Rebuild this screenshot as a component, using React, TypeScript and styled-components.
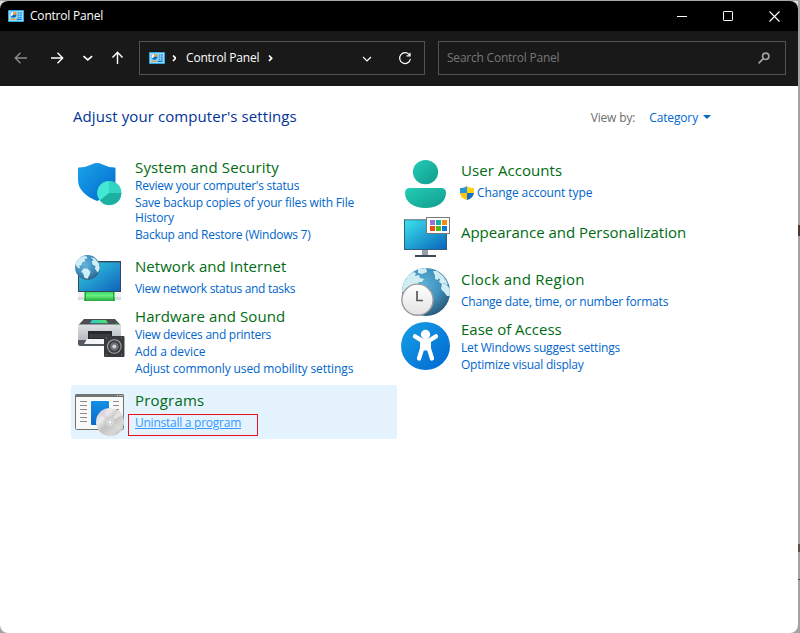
import React from "react";
import styled, { createGlobalStyle } from "styled-components";

const Global = createGlobalStyle`
  *, *::before, *::after { box-sizing: border-box; }
  html, body { margin: 0; padding: 0; overflow: hidden; }
  body { background: #a3a3a3; font-family: "Open Sans", "Noto Sans", sans-serif; font-size: 12px; }
`;

const Desktop = styled.div`
  position: relative;
  width: 800px;
  height: 633px;
  padding-top: 1px;
  overflow: hidden;
  background: linear-gradient(90deg, #dcdcdc 0 12px, #a3a3a3 12px 770px, #dcdcdc 790px 798px, #a3a3a3 798px);
  background-size: 100% 20px;
  background-repeat: no-repeat;
  &::before {
    content: "";
    position: absolute;
    inset: 0 0 auto 0;
    height: 1px;
    background: #a8a8a8;
  }
`;
const Window = styled.main`
  display: flex;
  flex-direction: column;
  width: 798px;
  height: 632px;
  border-radius: 8px;
  overflow: hidden;
  background: #fff;
`;
const TitleBar = styled.header`
  display: flex;
  align-items: center;
  height: 30px;
  padding: 0 1px 0 8px;
  background: #000;
  color: #fff;
`;
const Title = styled.span`
  margin-left: 6px;
  flex: 1;
  line-height: 16px;
  letter-spacing: -0.2px;
`;
const Controls = styled.div`
  display: flex;
  height: 30px;
`;
const Control = styled.div`
  display: grid;
  place-items: center;
  width: 46px;
`;
const NavBar = styled.nav`
  display: flex;
  align-items: flex-start;
  height: 55px;
  padding: 10px 12px 0 12px;
  background: #191919;
  color: #fff;
`;
const NavButtons = styled.div`
  display: flex;
  width: 127px;
  height: 34px;
  align-items: center;
`;
const AddressBar = styled.div`
  display: flex;
  align-items: center;
  width: 286px;
  height: 34px;
  padding-left: 9px;
  border: 1px solid #535353;
`;
const Crumb = styled.span`
  margin: -1px 0 0 10px;
  width: 75px;
  white-space: nowrap;
  letter-spacing: -0.18px;
`;
const SearchBox = styled.div`
  display: flex;
  align-items: center;
  justify-content: space-between;
  width: 348px;
  height: 34px;
  margin-left: 13px;
  padding: 0 15px 0 8px;
  border: 1px solid #535353;
  color: #777;
  letter-spacing: -0.22px;
`;
const SearchHint = styled.span`
  margin-top: -1px;
`;
const Content = styled.section`
  padding: 20px 0 0 71px;
`;
const PageHead = styled.div`
  display: flex;
  justify-content: space-between;
  height: 46px;
  padding: 0 87px 0 2px;
`;
const PageTitle = styled.h1`
  margin: 0;
  font-size: 15px;
  line-height: 20px;
  font-weight: 400;
  color: #003399;
  white-space: nowrap;
  letter-spacing: 0.09px;
`;
const ViewBy = styled.div`
  display: flex;
  align-items: center;
  height: 22px;
  color: #6d6d6d;
  letter-spacing: -0.15px;
`;
const ViewChoice = styled.a`
  margin: 0 5px 0 14px;
  color: #0066cc;
`;
const Columns = styled.div`
  display: grid;
  grid-template-columns: 326px 326px;
`;
const Column = styled.div``;

const Tile = styled.article<{ $h: number; $active?: boolean }>`
  display: grid;
  grid-template-columns: 50px 1fr;
  column-gap: 10px;
  height: ${(p) => p.$h}px;
  padding-left: 4px;
  border-radius: 2px;
  background: ${(p) => (p.$active ? "#e5f3ff" : "transparent")};
`;
const IconSlot = styled.div<{ $top: number }>`
  height: 48px;
  padding-top: ${(p) => p.$top}px;
  svg { display: block; overflow: visible; }
`;
const TileText = styled.div<{ $top: number }>`
  padding-top: ${(p) => p.$top}px;
`;
const TileTitle = styled.h2<{ $ls: number; $gap: number }>`
  margin: 0 0 ${(p) => p.$gap}px;
  font-size: 15px;
  line-height: 20px;
  font-weight: 400;
  color: #006b12;
  letter-spacing: ${(p) => p.$ls}px;
  white-space: nowrap;
`;
const TaskRow = styled.div`
  display: flex;
  align-items: center;
  margin-bottom: 2px;
`;
const Task = styled.a<{ $ls: number; $hot?: boolean }>`
  line-height: 15px;
  color: ${(p) => (p.$hot ? "#3399ff" : "#0066cc")};
  text-decoration: ${(p) => (p.$hot ? "underline" : "none")};
  letter-spacing: ${(p) => p.$ls}px;
  white-space: pre;
`;
const Highlight = styled.div`
  position: absolute;
  left: 128px;
  top: 414px;
  width: 130px;
  height: 22px;
  border: 1px solid #e81123;
`;
const EdgeMark = styled.div<{ $top: number; $h: number; $c: string }>`
  position: absolute;
  right: 0;
  top: ${(p) => p.$top}px;
  width: 2px;
  height: ${(p) => p.$h}px;
  background: ${(p) => p.$c};
`;

const PanelIcon = () => (
  <svg width="16" height="12" viewBox="0 0 16 12">
    <rect width="16" height="12" rx=".8" fill="#2fa9ea" />
    <rect x="1" y="1" width="14" height="10" fill="#a5e0fa" />
    <rect x="1.5" y="1.5" width="13" height="9" fill="#8ed6f8" />
    <circle cx="5.3" cy="4.7" r="3" fill="#0b6cc0" />
    <path d="M5.3 4.7V1.7a3 3 0 0 1 3 3z" fill="#ff9c1a" />
    <path d="M5.3 4.7V1.7A3 3 0 0 0 3 6.6z" fill="#f6fbff" />
    <path d="M9.7 3h1.2m.8 0h2M9.7 5.2h1.2m.8 0h2M9.7 7.3h1.2m.8 0h2" stroke="#0c72c8" />
    <path d="M2.5 9.4h5" stroke="#f19a2b" strokeWidth="1.2" />
    <path d="M8.7 9.4h5" stroke="#1276c4" strokeWidth="1.2" />
  </svg>
);

const ShieldIcon = () => (
  <svg width="50" height="48" viewBox="0 0 50 48">
    <defs>
      <linearGradient id="sh" x1="0" y1="0" x2="1" y2="1"><stop stopColor="#1ba4e8" /><stop offset="1" stopColor="#0068ce" /></linearGradient>
    </defs>
    <path d="M17 4.300Q22 1.500 27 4.300 33 7.500 39.500 7.500q1 0 1 1V20c0 10-7 17-18.500 21C10 36 3 29 3 20V8.500q0-1 1-1 7 0 13-3.200z" fill="url(#sh)" />
    <circle cx="34.3" cy="33" r="12" fill="#22bfae" />
    <path d="M34.3 33V21A12 12 0 0 1 46.3 33z" fill="#34d4c2" />
    <path d="M34.3 33L25 40.6A12 12 0 0 1 34.3 21z" fill="#42e8d4" />
    <path d="M34.3 33H46.3A12 12 0 0 1 25 40.6z" fill="#1bb0a1" />
  </svg>
);

const Globe = ({ id, cx, cy, r }: { id: string; cx: number; cy: number; r: number }) => (
  <g transform={`translate(${cx} ${cy}) scale(${r / 12})`}>
    <defs>
      <radialGradient id={id} cx=".4" cy=".38" r=".72"><stop stopColor="#63b4dc" /><stop offset=".55" stopColor="#3f8ebb" /><stop offset="1" stopColor="#27597b" /></radialGradient>
      <clipPath id={`${id}c`}><circle r="12" /></clipPath>
    </defs>
    <circle r="12" fill={`url(#${id})`} />
    <g clipPath={`url(#${id}c)`} fill="#d0eef5">
      <path d="M-12-4l2-4 5-3 4 0 1 2-3 1 1 2-3 1-1 3-2 0 1 3-3-1z" />
      <path d="M-4 1l4 0 3 3-1 3-2 4-3-1-1-4-2-2z" />
      <path d="M3-10l4 1 4 5 1 5-2 4-3-4 1-2-3-2-1-3 2-1z" />
    </g>
  </g>
);

const NetworkIcon = () => (
  <svg width="50" height="48" viewBox="0 0 50 48">
    <defs>
      <linearGradient id="nw" x1="0" y1="0" x2="1" y2="1"><stop stopColor="#35cfe2" /><stop offset="1" stopColor="#1062bd" /></linearGradient>
      <linearGradient id="ng" x1="0" y1="0" x2="0" y2="1"><stop stopColor="#42d766" /><stop offset=".4" stopColor="#67f27f" /><stop offset="1" stopColor="#25a83e" /></linearGradient>
    </defs>
    <rect x="3" y="6" width="43" height="31" fill="#33485a" />
    <rect x="4" y="7.4" width="41" height="28.6" fill="url(#nw)" />
    <rect x="3" y="38" width="43" height="7" fill="#d9dadd" />
    <rect x="3" y="38" width="43" height="4" fill="#f1f1f3" />
    <rect x="9" y="37" width="31" height="9" rx=".6" fill="url(#ng)" />
    <path d="M10.5 37v9M38.5 37v9" stroke="#249f3c" />
    <Globe id="g1" cx={12.5} cy={12.5} r={12.4} />
  </svg>
);

const PrinterIcon = () => (
  <svg width="50" height="48" viewBox="0 0 50 48">
    <defs>
      <linearGradient id="pb" x1="0" y1="0" x2="0" y2="1"><stop stopColor="#dfe1e5" /><stop offset="1" stopColor="#a9adb6" /></linearGradient>
      <linearGradient id="pg" x1="0" y1="0" x2="1" y2="0"><stop stopColor="#31c9d8" /><stop offset="1" stopColor="#4be45b" /></linearGradient>
    </defs>
    <path d="M9 5h31l6 6.500H3z" fill="#4b4e53" />
    <path d="M17 6h14l2 3.300H15z" fill="url(#pg)" />
    <rect x="3" y="10.500" width="43" height="20" rx="1.5" fill="url(#pb)" />
    <path d="M3 26h43v4q0 2-2 2H5q-2 0-2-2z" fill="#555a60" />
    <circle cx="41.5" cy="10.5" r="1" fill="#3ae654" />
    <path d="M13 17h24v9H13z" fill="#26282b" />
    <path d="M14 20h22v4H14z" fill="#383b3f" />
    <path d="M12 25h26l2 5H9z" fill="#f4f5f7" />
    <rect x="29" y="22" width="20.5" height="21" rx="1" fill="#37393d" />
    <circle cx="39.3" cy="32.5" r="7.3" fill="#aaadb0" />
    <circle cx="39.3" cy="32.5" r="6.3" fill="#3b3e42" />
    <circle cx="39.3" cy="32.5" r="4.3" fill="#6d7175" />
    <circle cx="39.3" cy="32.5" r="2" fill="#d0d2d4" />
    <path d="M31 24h1m14 0h1M31 41h1m14 0h1" stroke="#8c9095" />
  </svg>
);

const ProgramsIcon = () => (
  <svg width="50" height="48" viewBox="0 0 50 48">
    <defs>
      <linearGradient id="cd" x1="0" y1="0" x2="1" y2="1"><stop stopColor="#bdbfc0" /><stop offset=".3" stopColor="#ececec" /><stop offset=".5" stopColor="#c2c2c2" /><stop offset=".75" stopColor="#d8d8d8" /><stop offset="1" stopColor="#a2a4a5" /></linearGradient>
      <linearGradient id="pr" x1="0" y1="0" x2="0" y2="1"><stop stopColor="#1290e6" /><stop offset="1" stopColor="#096bc9" /></linearGradient>
    </defs>
    <rect x=".5" y="5.5" width="48" height="35" rx="1" fill="#f9f9f9" stroke="#70736e" />
    <path d="M0 5.5h49V8H0z" fill="#73766f" />
    <path d="M42 6.5h1m1.5 0h1m1 0h1" stroke="#e8e8e8" />
    <path d="M5 12.5h7M5 16.5h7M5 20.5h7M5 24.5h7M5 28.5h7M5 32.5h7M38 12.5h6M38 16.5h6M38 20.5h6" stroke="#8b8f93" />
    <rect x="16" y="12" width="18" height="24" rx="1" fill="url(#pr)" />
    <circle cx="35" cy="33" r="14" fill="url(#cd)" />
    <path d="M35 33L24 25q2-3 5-4z" fill="#e1d0e0" opacity=".75" />
    <path d="M35 33l8-11 4 4z" fill="#f6f6f6" opacity=".6" />
    <path d="M35 33l9 10 3-5z" fill="#d9e0cf" opacity=".6" />
    <circle cx="35" cy="33" r="4.7" fill="#d8dadb" stroke="#bbb" strokeWidth=".6" />
    <circle cx="35" cy="33" r="2" fill="#f7f9fa" stroke="#aaa" strokeWidth=".5" />
  </svg>
);

const UserIcon = () => (
  <svg width="50" height="48" viewBox="0 0 50 48">
    <defs>
      <linearGradient id="us" x1="0" y1="0" x2="1" y2="1"><stop stopColor="#24cdb7" /><stop offset="1" stopColor="#109b8c" /></linearGradient>
    </defs>
    <ellipse cx="24.5" cy="12.1" rx="12.600" ry="12.1" fill="url(#us)" />
    <path d="M9 28h31q5 0 5 5c0 9-9 15-20.500 15S4 42 4 33q0-5 5-5z" fill="url(#us)" />
  </svg>
);

const DisplayIcon = () => (
  <svg width="50" height="48" viewBox="0 0 50 48">
    <defs>
      <linearGradient id="ds" x1="0" y1="0" x2="1" y2="1"><stop stopColor="#3ce1ea" /><stop offset="1" stopColor="#0965bd" /></linearGradient>
    </defs>
    <path d="M21 36h6v6h-6z" fill="#93a1ac" />
    <rect x="14" y="42" width="21" height="2" fill="#3d4b58" />
    <rect x="3" y="6" width="43" height="31" rx=".6" fill="#2f5f80" />
    <path d="M3 6h43v1H3z" fill="#83929c" />
    <rect x="4" y="7.300" width="41" height="28.7" fill="url(#ds)" />
    <rect x="25.500" y="4.500" width="23" height="16" fill="#fff" stroke="#777" />
    <g>
      <path d="M29 7h5v5h-5z" fill="#9a70d4" /><path d="M35 7h5v5h-5z" fill="#13b1a2" /><path d="M41 7h5v5h-5z" fill="#f28c0e" />
      <path d="M29 13h5v5h-5z" fill="#e3500f" /><path d="M35 13h5v5h-5z" fill="#59b50f" /><path d="M41 13h5v5h-5z" fill="#0878d4" />
    </g>
  </svg>
);

const ClockIcon = () => (
  <svg width="50" height="48" viewBox="0 0 50 48">
    <defs>
      <radialGradient id="cg" cx=".42" cy=".35" r=".72"><stop stopColor="#5fb3da" /><stop offset=".5" stopColor="#4292be" /><stop offset="1" stopColor="#24526f" /></radialGradient>
      <clipPath id="cc"><circle cx="25" cy="24" r="24" /></clipPath>
      <linearGradient id="ck" x1="0" y1="0" x2="0" y2="1"><stop stopColor="#fff" /><stop offset="1" stopColor="#e3e3e5" /></linearGradient>
    </defs>
    <circle cx="25" cy="24" r="24" fill="url(#cg)" />
    <g clipPath="url(#cc)" fill="#cfedf3">
      <path d="M3 14l4-6 5-4 3 1-1 3 4-1 1 3 4 1-2 3-3 0-2 3-4 0-3 4-4 1-1 4-4-3z" />
      <path d="M17 1l8-1 1 4-5 2-4-1z" />
      <path d="M32 3l4 0 6 5 4 6 1 3-4-2-2 1-3-2 1-3-4-1z" />
      <path d="M41 15l4 1 5 6 0 6-4 0-3-4-3-3z" />
      <path d="M34 8l3 1 0 3-3-1z" />
    </g>
    <circle cx="16.5" cy="31.700" r="15.600" fill="url(#ck)" stroke="#9b9b9d" strokeWidth="1.400" />
    <path d="M16 23v9.500h6" fill="none" stroke="#56585a" strokeWidth="1.700" />
  </svg>
);

const AccessIcon = () => (
  <svg width="50" height="48" viewBox="0 0 50 48">
    <defs>
      <linearGradient id="ac" x1="0" y1="0" x2="1" y2="1"><stop stopColor="#17a0e6" /><stop offset="1" stopColor="#0068d0" /></linearGradient>
    </defs>
    <ellipse cx="24.500" cy="24" rx="24.500" ry="24" fill="url(#ac)" />
    <circle cx="24.500" cy="12.500" r="4.700" fill="#fff" />
    <path d="M14 14.300l6.500 4q4 1.700 8 0l6.500-4M21.300 26L18 36.500M27.700 26L31 36.500" fill="none" stroke="#fff" strokeWidth="4.300" strokeLinecap="round" strokeLinejoin="round" />
    <path d="M19 17.500h11v11H19z" fill="#fff" />
  </svg>
);

const UacShield = styled.svg`
  width: 14px;
  height: 14px;
  margin: 0 3px 0 -1px;
`;
const Uac = () => (
  <UacShield viewBox="0 0 14 14">
    <defs>
      <clipPath id="uc"><path d="M7 0c2 1.500 4 2 7 2v4c0 4-3 7-7 8-4-1-7-4-7-8V2c3 0 5-.5 7-2z" /></clipPath>
    </defs>
    <g clipPath="url(#uc)">
      <path d="M0 0h7v7H0z" fill="#2496dc" /><path d="M7 0h7v7H7z" fill="#ffd20c" />
      <path d="M0 7h7v7H0z" fill="#fdc310" /><path d="M7 7h7v7H7z" fill="#126fc0" />
    </g>
  </UacShield>
);

type Item = { t: string; ls: number; shield?: boolean; hot?: boolean };
type Category = {
  title: string; ls: number; h: number; iconTop: number; textTop: number; gap: number;
  icon: React.ReactNode; items: Item[]; active?: boolean;
};

const left: Category[] = [
  { title: "System and Security", ls: 0.16, h: 100, iconTop: 8, textTop: 5, gap: 1, icon: <ShieldIcon />, items: [
    { t: "Review your computer's status", ls: -0.24 },
    { t: "Save backup copies of your files with File\nHistory", ls: -0.18 },
    { t: "Backup and Restore (Windows 7)", ls: -0.25 },
  ] },
  { title: "Network and Internet", ls: 0.04, h: 50, iconTop: 3, textTop: 4, gap: 5, icon: <NetworkIcon />, items: [
    { t: "View network status and tasks", ls: -0.3 },
  ] },
  { title: "Hardware and Sound", ls: 0.1, h: 83, iconTop: 12, textTop: 4, gap: 1, icon: <PrinterIcon />, items: [
    { t: "View devices and printers", ls: -0.26 },
    { t: "Add a device", ls: -0.03 },
    { t: "Adjust commonly used mobility settings", ls: -0.11 },
  ] },
  { title: "Programs", ls: 0.2, h: 54, iconTop: 4, textTop: 5, gap: 5, icon: <ProgramsIcon />, active: true, items: [
    { t: "Uninstall a program", ls: -0.25, hot: true },
  ] },
];
const right: Category[] = [
  { title: "User Accounts", ls: 0.07, h: 60, iconTop: 8, textTop: 8, gap: 5, icon: <UserIcon />, items: [
    { t: "Change account type", ls: -0.1, shield: true },
  ] },
  { title: "Appearance and Personalization", ls: -0.03, h: 53, iconTop: 1, textTop: 10, gap: 0, icon: <DisplayIcon />, items: [] },
  { title: "Clock and Region", ls: 0.25, h: 54, iconTop: 3, textTop: 4, gap: 5, icon: <ClockIcon />, items: [
    { t: "Change date, time, or number formats", ls: -0.22 },
  ] },
  { title: "Ease of Access", ls: 0, h: 60, iconTop: 3, textTop: 0, gap: 1, icon: <AccessIcon />, items: [
    { t: "Let Windows suggest settings", ls: -0.18 },
    { t: "Optimize visual display", ls: -0.22 },
  ] },
];

const CategoryTile = ({ c }: { c: Category }) => (
  <Tile $h={c.h} $active={c.active}>
    <IconSlot $top={c.iconTop}>{c.icon}</IconSlot>
    <TileText $top={c.textTop}>
      <TileTitle $ls={c.ls} $gap={c.gap}>{c.title}</TileTitle>
      {c.items.map((i) => (
        <TaskRow key={i.t}>
          {i.shield && <Uac />}
          <Task $ls={i.ls} $hot={i.hot}>{i.t}</Task>
        </TaskRow>
      ))}
    </TileText>
  </Tile>
);

export default function App() {
  return (
    <>
      <Global />
      <Desktop>
        <Window>
          <TitleBar>
            <PanelIcon />
            <Title>Control Panel</Title>
            <Controls>
              <Control><svg width="10" height="10"><path d="M0 5.500h10" stroke="#fff" /></svg></Control>
              <Control><svg width="10" height="10"><rect x=".5" y=".5" width="9" height="9" rx=".6" fill="none" stroke="#fff" /></svg></Control>
              <Control><svg width="11" height="11"><path d="M.5.5l10 10M10.500.5l-10 10" stroke="#fff" strokeWidth="1.100" /></svg></Control>
            </Controls>
          </TitleBar>
          <NavBar>
            <NavButtons>
              <svg width="127" height="34" viewBox="0 0 127 34" fill="none" stroke="#fff" strokeWidth="1.400">
                <path d="M15 17H3.500M8.500 11.800L3.300 17l5.200 5.200" stroke="#8c8c8c" />
                <path d="M39 17h11.500M45.500 11.800L50.700 17l-5.200 5.200" />
                <path d="M71.500 15.200l4.300 3.600 4.300-3.600" strokeWidth="1.700" />
                <path d="M105.500 23V11.500M100.500 16.500l5-5.200 5 5.200" />
              </svg>
            </NavButtons>
            <AddressBar>
              <PanelIcon />
              <svg width="11" height="12" viewBox="0 0 11 12"><path d="M8 3.500l2.700 2.700L8 9" fill="none" stroke="#fff" strokeWidth="1.700" /></svg>
              <Crumb>Control Panel</Crumb>
              <svg width="150" height="32" viewBox="0 0 150 32" fill="none" stroke="#fff">
                <path d="M8 13.500l2.700 2.700L8 19" strokeWidth="1.700" />
                <path d="M102 15l4 4 4-4" strokeWidth="1.200" />
                <path d="M148.500 13A5.400 5.400 0 1 0 149.400 17M149 10.800v3h-3.500" strokeWidth="1.200" />
              </svg>
            </AddressBar>
            <SearchBox>
              <SearchHint>Search Control Panel</SearchHint>
              <svg width="12" height="12" viewBox="0 0 12 12" fill="none" stroke="#a0a0a0" strokeWidth="1.700"><circle cx="7.700" cy="4.300" r="3.200" /><path d="M5.300 6.700L.6 11.400" /></svg>
            </SearchBox>
          </NavBar>
          <Content>
            <PageHead>
              <PageTitle>Adjust your computer's settings</PageTitle>
              <ViewBy>
                <span>View by:</span>
                <ViewChoice>Category</ViewChoice>
                <svg width="8" height="4"><path d="M0 0h8L4 4z" fill="#0066cc" /></svg>
              </ViewBy>
            </PageHead>
            <Columns>
              <Column>{left.map((c) => <CategoryTile key={c.title} c={c} />)}</Column>
              <Column>{right.map((c) => <CategoryTile key={c.title} c={c} />)}</Column>
            </Columns>
          </Content>
        </Window>
        <Highlight />
        <EdgeMark $top={225} $h={11} $c="#4a3a30" />
        <EdgeMark $top={544} $h={8} $c="#5a5048" />
        <EdgeMark $top={579} $h={1} $c="#444" />
      </Desktop>
    </>
  );
}
